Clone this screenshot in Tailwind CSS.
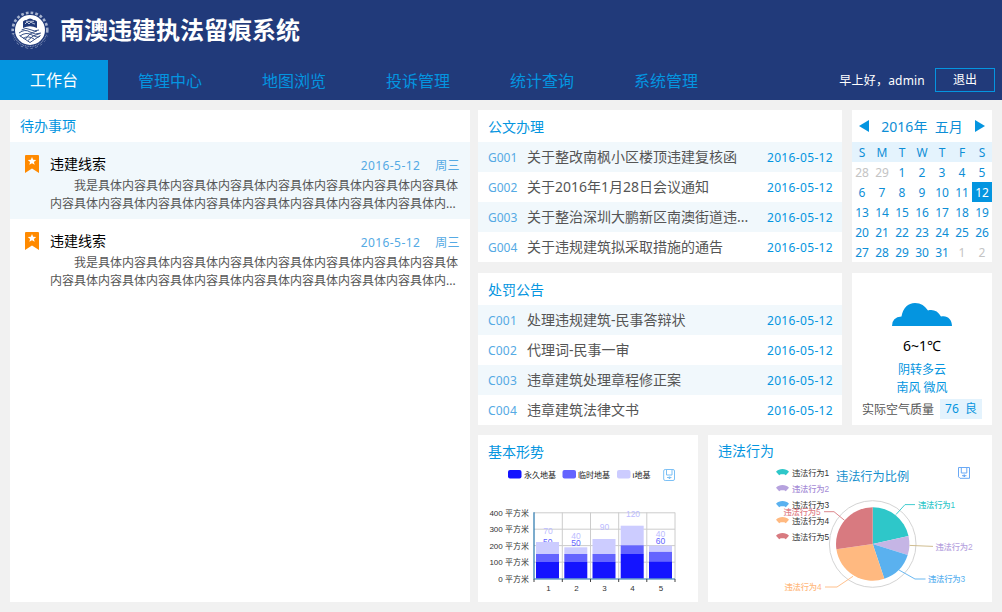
<!DOCTYPE html>
<html lang="zh-CN">
<head>
<meta charset="utf-8">
<title>南澳违建执法留痕系统</title>
<script src="https://cdn.jsdelivr.net/npm/@tailwindcss/browser@4"></script>
</head>
<body class="w-[1002px] h-[612px] overflow-hidden bg-[#f1f1f1] font-['Noto_Sans','Noto_Sans_CJK_SC',sans-serif] text-[12px] leading-[20px] text-[#555]">
<header class="bg-[#213a7a]">
  <div class="flex h-[60px] items-center pl-[10px]">
    <svg class="h-10 w-10 shrink-0" viewBox="0 0 40 40" fill="none">
      <circle cx="20" cy="20" r="17.3" stroke="#a8b4cf" stroke-width="2.6" stroke-dasharray="2.7 2.1" pathLength="108"/>
      <path d="M3.4 24A17.3 17.3 0 0 0 36.6 24" stroke="#213a7a" stroke-width="3.4"/>
      <path d="M3.4 24A17.3 17.3 0 0 0 36.6 24" stroke="#8291b8" stroke-width="1.2" stroke-dasharray="1 .7"/>
      <circle cx="20" cy="20" r="15" fill="#fff"/>
      <path d="M13 11.500Q14.500 9.500 16.500 10 20 7 23.500 10 25.500 9.500 27 11.500V18Q20 14.500 13 18Z" fill="#213a7a"/>
      <path d="M15 14l2-2 2 2 2-2 2 1.500 2 .5M16 11.300h8" stroke="#dfe4f0" stroke-width=".8"/>
      <path d="M11.500 20Q16 17 20 19.500T29 20M9 23Q15 18.500 20 22T31 23M10 26Q16 21.500 22 25T30 26M13 28.500Q18 25 24 29M20 32.500L9.500 25.500M20 32.500L30.500 25.500M18 30.500Q22 25 30 23.500M15.500 29Q19 23 27 21" stroke="#3a5288" stroke-width="1"/>
    </svg>
    <h1 class="pl-[10px] text-[24px] leading-[30px] font-bold text-white">南澳违建执法留痕系统</h1>
  </div>
  <nav class="flex h-10 items-center text-[16px] leading-[40px] text-[#0495e0]">
    <a class="bg-[#0495e0] px-[30px] text-white">工作台</a>
    <a class="px-[30px] pt-px">管理中心</a>
    <a class="px-[30px] pt-px">地图浏览</a>
    <a class="px-[30px] pt-px">投诉管理</a>
    <a class="px-[30px] pt-px">统计查询</a>
    <a class="px-[30px] pt-px">系统管理</a>
    <div class="ml-auto flex items-center pr-[7px] text-[12px] text-white">
      <span class="mr-[10px] pt-px tracking-[0.2px]">早上好，admin</span>
      <button class="h-6 w-[60px] border border-[#0495e0] text-[12px] leading-[22px]">退出</button>
    </div>
  </nav>
</header>

<main class="flex gap-2 px-[10px] pt-[10px]">
  <section class="h-[492px] w-[460px] bg-white">
    <h2 class="h-8 px-[10px] text-[14px] leading-[32px] text-[#0495e0]">待办事项</h2>
    <article class="flex h-[77px] bg-[#f1f8fc] pl-[15px] pt-[13px]">
      <svg class="h-[18px] w-[14px] shrink-0" viewBox="0 0 14 18"><path d="M0 1Q0 0 1 0H13Q14 0 14 1V18L7 13.500 0 18Z" fill="#ff8a00"/><path d="M7 2l1.200 2.800 3 .2-2.300 1.900.8 2.900L7 8.200 4.300 9.800l.8-2.900L2.800 5l3-.2Z" fill="#fff"/></svg>
      <div class="ml-[11px] w-[410px]">
        <div class="flex h-[22px] leading-[18px]">
          <h3 class="text-[14px] text-black">违建线索</h3>
          <span class="ml-auto pt-[2px] tracking-[0.4px] text-[#55aae4]">2016-5-12</span><span class="ml-[15px] pt-[2px] tracking-[0.4px] text-[#55aae4]">周三</span>
        </div>
        <p class="whitespace-nowrap indent-[24px] leading-[18px]">我是具体内容具体内容具体内容具体内容具体内容具体内容具体内容具体</p>
        <p class="whitespace-nowrap leading-[18px]">内容具体内容具体内容具体内容具体内容具体内容具体内容具体内容具体内...</p>
      </div>
    </article>
    <article class="flex h-[77px] pl-[15px] pt-[13px]">
      <svg class="h-[18px] w-[14px] shrink-0" viewBox="0 0 14 18"><path d="M0 1Q0 0 1 0H13Q14 0 14 1V18L7 13.500 0 18Z" fill="#ff8a00"/><path d="M7 2l1.200 2.800 3 .2-2.300 1.900.8 2.900L7 8.200 4.300 9.800l.8-2.900L2.800 5l3-.2Z" fill="#fff"/></svg>
      <div class="ml-[11px] w-[410px]">
        <div class="flex h-[22px] leading-[18px]">
          <h3 class="text-[14px] text-black">违建线索</h3>
          <span class="ml-auto pt-[2px] tracking-[0.4px] text-[#55aae4]">2016-5-12</span><span class="ml-[15px] pt-[2px] tracking-[0.4px] text-[#55aae4]">周三</span>
        </div>
        <p class="whitespace-nowrap indent-[24px] leading-[18px]">我是具体内容具体内容具体内容具体内容具体内容具体内容具体内容具体</p>
        <p class="whitespace-nowrap leading-[18px]">内容具体内容具体内容具体内容具体内容具体内容具体内容具体内容具体内...</p>
      </div>
    </article>
  </section>

  <div class="w-[514px]">
    <div class="flex gap-[10px]">
      <div class="flex w-[364px] flex-col gap-[11px]">
        <section class="h-[152px] bg-white">
          <h2 class="h-8 px-[10px] text-[14px] leading-[34px] text-[#0495e0]">公文办理</h2>
          <ul class="text-[14px] leading-[30px]">
            <li class="flex h-[30px] bg-[#f1f8fc] px-[9px]"><span class="w-10 pt-px pl-px text-[12px] text-[#55aae4]">G001</span><span>关于整改南枫小区楼顶违建复核函</span><time class="ml-auto pt-px text-[12px] tracking-[0.34px] text-[#0495e0]">2016-05-12</time></li>
            <li class="flex h-[30px] px-[9px]"><span class="w-10 pt-px pl-px text-[12px] text-[#55aae4]">G002</span><span>关于2016年1月28日会议通知</span><time class="ml-auto pt-px text-[12px] tracking-[0.34px] text-[#0495e0]">2016-05-12</time></li>
            <li class="flex h-[30px] bg-[#f1f8fc] px-[9px]"><span class="w-10 pt-px pl-px text-[12px] text-[#55aae4]">G003</span><span>关于整治深圳大鹏新区南澳街道违...</span><time class="ml-auto pt-px text-[12px] tracking-[0.34px] text-[#0495e0]">2016-05-12</time></li>
            <li class="flex h-[30px] px-[9px]"><span class="w-10 pt-px pl-px text-[12px] text-[#55aae4]">G004</span><span>关于违规建筑拟采取措施的通告</span><time class="ml-auto pt-px text-[12px] tracking-[0.34px] text-[#0495e0]">2016-05-12</time></li>
          </ul>
        </section>
        <section class="h-[152px] bg-white">
          <h2 class="h-8 px-[10px] text-[14px] leading-[34px] text-[#0495e0]">处罚公告</h2>
          <ul class="text-[14px] leading-[30px]">
            <li class="flex h-[30px] bg-[#f1f8fc] px-[9px]"><span class="w-10 pt-px pl-px text-[12px] tracking-[0.2px] text-[#55aae4]">C001</span><span>处理违规建筑-民事答辩状</span><time class="ml-auto pt-px text-[12px] tracking-[0.34px] text-[#0495e0]">2016-05-12</time></li>
            <li class="flex h-[30px] px-[9px]"><span class="w-10 pt-px pl-px text-[12px] tracking-[0.2px] text-[#55aae4]">C002</span><span>代理词-民事一审</span><time class="ml-auto pt-px text-[12px] tracking-[0.34px] text-[#0495e0]">2016-05-12</time></li>
            <li class="flex h-[30px] bg-[#f1f8fc] px-[9px]"><span class="w-10 pt-px pl-px text-[12px] tracking-[0.2px] text-[#55aae4]">C003</span><span>违章建筑处理章程修正案</span><time class="ml-auto pt-px text-[12px] tracking-[0.34px] text-[#0495e0]">2016-05-12</time></li>
            <li class="flex h-[30px] px-[9px]"><span class="w-10 pt-px pl-px text-[12px] tracking-[0.2px] text-[#55aae4]">C004</span><span>违章建筑法律文书</span><time class="ml-auto pt-px text-[12px] tracking-[0.34px] text-[#0495e0]">2016-05-12</time></li>
          </ul>
        </section>
      </div>

      <div class="flex w-[140px] flex-col gap-[11px]">
        <section class="h-[152px] bg-white text-[#0d8ed6]">
          <div class="flex h-8 items-center justify-between px-[7px] text-[14px] leading-[34px]">
            <svg class="h-3 w-[10px]" viewBox="0 0 10 12"><path d="M10 0V12L0 6Z" fill="#0495e0"/></svg>
            <span class="whitespace-pre pt-px">2016年  五月</span>
            <svg class="h-3 w-[10px]" viewBox="0 0 10 12"><path d="M0 0V12L10 6Z" fill="#0495e0"/></svg>
          </div>
          <div class="grid h-5 grid-cols-7 bg-[#e4f3fd] text-center leading-[21px]"><span>S</span><span>M</span><span>T</span><span>W</span><span>T</span><span>F</span><span>S</span></div>
          <div class="grid auto-rows-[20px] grid-cols-7 text-center leading-[21px]">
            <span class="text-[#c4c4c4]">28</span><span class="text-[#c4c4c4]">29</span><span>1</span><span>2</span><span>3</span><span>4</span><span>5</span>
            <span>6</span><span>7</span><span>8</span><span>9</span><span>10</span><span>11</span><span class="bg-[#0495e0] text-white">12</span>
            <span>13</span><span>14</span><span>15</span><span>16</span><span>17</span><span>18</span><span>19</span>
            <span>20</span><span>21</span><span>22</span><span>23</span><span>24</span><span>25</span><span>26</span>
            <span>27</span><span>28</span><span>29</span><span>30</span><span>31</span><span class="text-[#c4c4c4]">1</span><span class="text-[#c4c4c4]">2</span>
          </div>
        </section>
        <section class="flex h-[152px] flex-col items-center bg-white pt-[30px]">
          <svg class="h-[23px] w-[60px] shrink-0" viewBox="0 0 60 23"><path d="M0 23Q0 14 9.500 13.500C11 5 16 0 23 0 29 0 33 3 36 7.500 41 6 46 8 49 13.500 55 12 60 16 60 23Z" fill="#0495e0"/></svg>
          <p class="mt-[10px] text-[14px] leading-[20px] text-black">6~1℃</p>
          <p class="mt-[5px] leading-[18px] text-[#0495e0]">阴转多云</p>
          <p class="leading-[18px] text-[#0495e0]">南风 微风</p>
          <div class="mt-[2px] flex h-5 w-[120px] justify-between"><span class="pt-px">实际空气质量</span><span class="w-[42px] bg-[#e4f3fd] text-center whitespace-pre text-[#0495e0]">76  良</span></div>
        </section>
      </div>
    </div>

    <div class="mt-[10px] flex h-[167px] gap-[10px]">
      <section class="w-[220px] bg-white">
        <h2 class="h-8 px-[10px] text-[14px] leading-[34px] text-[#0495e0]">基本形势</h2>
        <svg class="block h-[135px] w-[220px]" viewBox="478 467 220 135" font-family="Liberation Sans, Noto Sans CJK SC, sans-serif" font-size="8">
          <rect x="508" y="470" width="13.500" height="8.500" rx="2" fill="#1414ff"/>
          <rect x="562.500" y="470" width="13.500" height="8.500" rx="2" fill="#6464ff"/>
          <rect x="617" y="470" width="13.500" height="8.500" rx="2" fill="#ccccff"/>
          <g fill="#222">
            <text x="524" y="477.500" textLength="32">永久地基</text>
            <text x="578" y="477.500" textLength="32">临时地基</text>
            <text x="632.500" y="477.500" textLength="18">i地基</text>
          </g>
          <g fill="none" stroke="#7cc0f5"><rect x="663.700" y="469.500" width="10.800" height="11" rx="1.500"/><path d="M666.500 469.500v5.500h5.500v-5.500M667 477.500h4.500"/><path d="M669.500 476.500v2.500" stroke-width="1.500"/></g>
          <path d="M534 512.800H675M534 529.200H675M534 545.600H675M534 562.200H675M562.300 512.500V579M590.500 512.500V579M618.700 512.500V579M646.800 512.500V579M675 512.500V579" stroke="#ccc" fill="none"/>
          <g text-anchor="middle" font-size="8.500" fill="#6464ff">
            <text x="547.800" y="545">50</text><text x="576" y="545.500">50</text><text x="660.500" y="543.500">60</text>
          </g>
          <g fill="#ccccff"><rect x="536" y="542" width="23" height="12"/><rect x="564.300" y="547.300" width="23" height="7"/><rect x="592.500" y="539" width="23" height="15"/><rect x="620.700" y="525.700" width="23" height="20"/><rect x="649" y="545.700" width="23" height="6"/></g>
          <g fill="#6464ff"><rect x="536" y="554" width="23" height="8"/><rect x="564.300" y="554" width="23" height="8"/><rect x="592.500" y="554" width="23" height="8"/><rect x="620.700" y="545.300" width="23" height="9"/><rect x="649" y="551.800" width="23" height="10"/></g>
          <g fill="#1414ff"><rect x="536" y="562" width="23" height="16.500"/><rect x="564.300" y="562" width="23" height="16.500"/><rect x="592.500" y="562" width="23" height="16.500"/><rect x="620.700" y="554" width="23" height="24.500"/><rect x="649" y="561.600" width="23" height="17"/></g>
          <g text-anchor="middle" font-size="8.500" fill="#bcbcff">
            <text x="548" y="533.800">70</text><text x="576" y="538.800">40</text><text x="604.500" y="530.300">90</text><text x="633" y="517.300">120</text><text x="660.500" y="537">40</text>
          </g>
          <path d="M534 512.300V579H675" fill="none" stroke="#2676ac" stroke-width="1.200"/>
          <path d="M534 579v3M562.300 579v3M590.500 579v3M618.700 579v3M646.800 579v3M675 579v3" stroke="#444"/>
          <g text-anchor="end" fill="#333">
            <text x="529" y="516">400 平方米</text><text x="529" y="532.400">300 平方米</text><text x="529" y="548.800">200 平方米</text><text x="529" y="565.300">100 平方米</text><text x="529" y="581.800">0 平方米</text>
          </g>
          <g text-anchor="middle" fill="#333"><text x="548.500" y="591.300">1</text><text x="576.500" y="591.300">2</text><text x="604.500" y="591.300">3</text><text x="632.500" y="591.300">4</text><text x="661" y="591.300">5</text></g>
        </svg>
      </section>

      <section class="w-[284px] bg-white">
        <h2 class="h-8 px-[10px] text-[14px] leading-[32px] text-[#0495e0]">违法行为</h2>
        <svg class="block h-[135px] w-[284px]" viewBox="708 467 284 135" font-family="Liberation Sans, Noto Sans CJK SC, sans-serif" font-size="8.300">
          <defs><path id="lens" d="M0 2.800C3-1 10-1 13 2.800L9.800 6.300 8.300 5.300H4.700L3.200 6.300Z"/></defs>
          <use href="#lens" x="776" y="469" fill="#2ec7c9"/>
          <use href="#lens" x="776" y="485" fill="#b6a2de"/>
          <use href="#lens" x="776" y="501" fill="#5ab1ef"/>
          <use href="#lens" x="776" y="517" fill="#ffb980"/>
          <use href="#lens" x="776" y="533" fill="#d87a80"/>
          <g fill="#333">
            <text x="792" y="475.500" textLength="37">违法行为1</text>
            <text x="792" y="491.500" textLength="37" fill="#a58cd6" font-weight="500">违法行为2</text>
            <text x="792" y="507.500" textLength="37">违法行为3</text>
            <text x="792" y="523.500" textLength="37">违法行为4</text>
            <text x="792" y="539.500" textLength="37">违法行为5</text>
          </g>
          <text x="836" y="480.500" font-size="12.200" fill="#158fcd">违法行为比例</text>
          <g fill="none" stroke="#6aa9f5"><path d="M958.500 467.500h11v10.800h-9.500l-1.500-1.500z"/><path d="M961.300 467.500v5.500h5.500v-5.500M962 475.700h4.500"/><path d="M964.300 474.500v2.500" stroke-width="1.500"/></g>
          <circle cx="872.700" cy="544" r="43.300" fill="none" stroke="#d4d4d4"/>
          <path d="M872.700 544V507.300A36.700 36.700 0 0 1 908.500 535.900Z" fill="#2ec7c9"/>
          <path d="M872.700 544L908.500 535.900A36.700 36.700 0 0 1 907.700 555.100Z" fill="#c5b5e5"/>
          <path d="M872.700 544L907.700 555.100A36.700 36.700 0 0 1 884.300 578.800Z" fill="#5ab1ef"/>
          <path d="M872.700 544L884.300 578.800A36.700 36.700 0 0 1 836.400 549.300Z" fill="#ffb980"/>
          <path d="M872.700 544L836.400 549.300A36.700 36.700 0 0 1 872.700 507.300Z" fill="#d87a80"/>
          <g fill="none" stroke-width=".9">
            <path d="M896 514.500L905 504.600H915" stroke="#2ec7c9"/>
            <path d="M909.500 545.400L933 546.400" stroke="#cbb583"/>
            <path d="M899 570L915 579H925.500" stroke="#5ab1ef"/>
            <path d="M853 576.300L837 587H825" stroke="#ffb980"/>
            <path d="M844.500 520.300L834 511.700H824" stroke="#d87a80"/>
          </g>
          <g font-weight="500">
            <text x="918" y="508" textLength="37" fill="#2ec7c9">违法行为1</text>
            <text x="935.500" y="549.600" textLength="37" fill="#b6a2de">违法行为2</text>
            <text x="928" y="582.300" textLength="37" fill="#5ab1ef">违法行为3</text>
            <text x="784.500" y="590.300" textLength="37" fill="#ffb980">违法行为4</text>
            <text x="783.500" y="515.300" textLength="37" fill="#e08088">违法行为5</text>
          </g>
        </svg>
      </section>
    </div>
  </div>
</main>
</body>
</html>
